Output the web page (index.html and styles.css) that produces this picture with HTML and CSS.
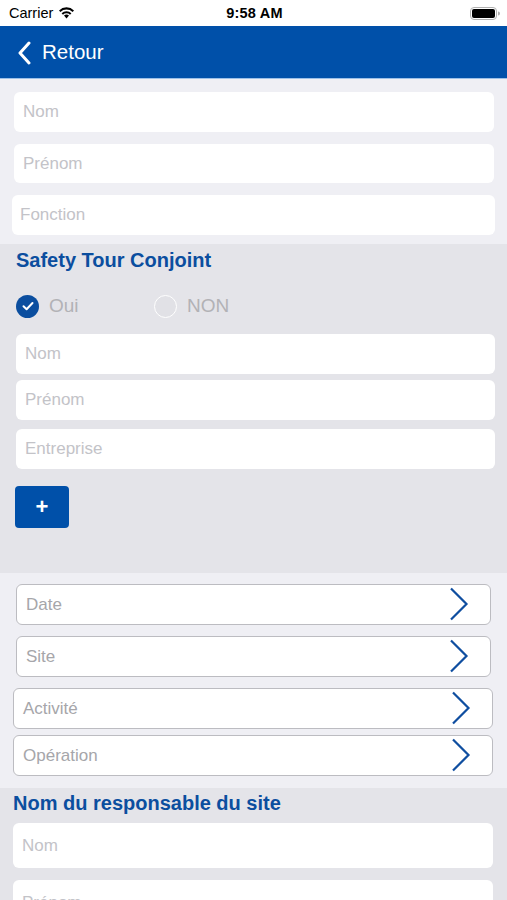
FILE: index.html
```html
<!DOCTYPE html>
<html lang="fr">
<head>
<meta charset="utf-8">
<title>Safety Tour</title>
<link rel="stylesheet" href="styles.css">
</head>
<body>
<div class="screen">
  <div class="status">
    <div class="status-left">
      <span>Carrier</span>
      <svg class="wifi" width="17" height="13" viewBox="0 0 17 13">
        <path d="M8.5 12.5 L11 9.6 A4 4 0 0 0 6 9.6 Z" fill="#000"/>
        <path d="M3.6 7.2 A7 7 0 0 1 13.4 7.2 L12 8.7 A5 5 0 0 0 5 8.7 Z" fill="#000"/>
        <path d="M1 4.4 A10.8 10.8 0 0 1 16 4.4 L14.6 5.9 A8.8 8.8 0 0 0 2.4 5.9 Z" fill="#000"/>
      </svg>
    </div>
    <div class="status-time">9:58 AM</div>
    <div class="status-right">
      <svg width="30" height="13" viewBox="0 0 30 13">
        <rect x="0.5" y="0.5" width="26" height="12" rx="3.5" fill="none" stroke="#b0b0b0"/>
        <rect x="2" y="2" width="23" height="9" rx="2" fill="#000"/>
        <path d="M28 4.5 A2 2 0 0 1 28 8.5 Z" fill="#b0b0b0"/>
      </svg>
    </div>
  </div>
  <div class="navbar">
    <svg class="back" width="14" height="24" viewBox="0 0 14 24">
      <path d="M12 2 L3 12 L12 22" fill="none" stroke="#fff" stroke-width="3" stroke-linecap="round" stroke-linejoin="round"/>
    </svg>
    <span class="back-label">Retour</span>
  </div>

  <section class="sec sec-light sec-one">
    <div class="field f-a">Nom</div>
    <div class="field f-a">Prénom</div>
    <div class="field f-b">Fonction</div>
  </section>

  <section class="sec sec-dark sec-two">
    <h2 class="title">Safety Tour Conjoint</h2>
    <div class="radios">
      <div class="radio">
        <span class="dot dot-on">
          <svg width="22" height="22" viewBox="0 0 22 22"><path d="M6.5 11.3 L9.6 14.3 L15.5 8" fill="none" stroke="#fff" stroke-width="2" stroke-linecap="round" stroke-linejoin="round"/></svg>
        </span>
        <span class="radio-label">Oui</span>
      </div>
      <div class="radio">
        <span class="dot dot-off"></span>
        <span class="radio-label">NON</span>
      </div>
    </div>
    <div class="stack">
      <div class="field f-c">Nom</div>
      <div class="field f-c">Prénom</div>
      <div class="field f-c f-gap">Entreprise</div>
    </div>
    <button class="plus">+</button>
  </section>

  <section class="sec sec-light sec-three">
    <div class="row r-a"><span>Date</span><svg class="chev" width="20" height="34" viewBox="0 0 20 34"><path d="M2 1.5 L17.5 17 L2 32.5" fill="none" stroke="#0f4ea0" stroke-width="2.2"/></svg></div>
    <div class="row r-a"><span>Site</span><svg class="chev" width="20" height="34" viewBox="0 0 20 34"><path d="M2 1.5 L17.5 17 L2 32.5" fill="none" stroke="#0f4ea0" stroke-width="2.2"/></svg></div>
    <div class="row r-b"><span>Activité</span><svg class="chev" width="20" height="34" viewBox="0 0 20 34"><path d="M2 1.5 L17.5 17 L2 32.5" fill="none" stroke="#0f4ea0" stroke-width="2.2"/></svg></div>
    <div class="row r-b r-tight"><span>Opération</span><svg class="chev" width="20" height="34" viewBox="0 0 20 34"><path d="M2 1.5 L17.5 17 L2 32.5" fill="none" stroke="#0f4ea0" stroke-width="2.2"/></svg></div>
  </section>

  <section class="sec sec-dark sec-four">
    <h2 class="title title-b">Nom du responsable du site</h2>
    <div class="field f-d f-tall">Nom</div>
    <div class="field f-d f-tall f-next">Prénom</div>
  </section>
</div>
</body>
</html>
```

FILE: styles.css
```css
* { box-sizing: border-box; }
html, body { margin: 0; padding: 0; }
body {
  font-family: "Liberation Sans", Arial, sans-serif;
  background: #e4e4e9;
  width: 507px;
  height: 900px;
  overflow: hidden;
}
.screen { display: flex; flex-direction: column; }

.status {
  height: 26px;
  background: #fff;
  display: flex;
  align-items: center;
  justify-content: space-between;
  padding: 0 7px 0 9px;
  font-size: 14.5px;
  color: #000;
}
.status-left { display: flex; align-items: center; gap: 5px; width: 120px; }
.wifi { margin-top: -2px; }
.status-time { font-weight: bold; font-size: 14.5px; letter-spacing: 0.2px; }
.status-right { width: 120px; display: flex; justify-content: flex-end; }

.navbar {
  height: 53px;
  background: #0050a9;
  border-bottom: 1px solid #9cc0e8;
  display: flex;
  align-items: center;
  padding-left: 17px;
  gap: 11px;
  color: #fff;
}
.back { margin-top: 1px; }
.back-label { font-size: 20.5px; }

.sec { display: flex; flex-direction: column; }
.sec-light { background: #efeff4; }
.sec-dark { background: #e4e4e9; }

.field {
  background: #fff;
  height: 40px;
  border-radius: 6px;
  display: flex;
  align-items: center;
  color: #c3c3c8;
  font-size: 17px;
  padding-left: 9px;
}

.sec-one { padding: 13px 0 9px; gap: 12px; height: 165px; }
.f-a { margin: 0 13px 0 14px; }
.f-b { margin: 0 12px 0 12px; padding-left: 8px; }

.sec-two { height: 329px; padding: 5px 0 0; }
.title {
  margin: 0;
  font-size: 20px;
  font-weight: bold;
  color: #0b4e9f;
  padding-left: 16px;
  line-height: 22px;
}
.radios {
  display: flex;
  align-items: center;
  padding-left: 16px;
  margin-top: 23px;
  height: 24px;
}
.radio { display: flex; align-items: center; width: 138px; }
.dot {
  width: 23px; height: 23px; border-radius: 50%;
  display: inline-flex; align-items: center; justify-content: center;
}
.dot-on { background: #0b4e9f; }
.dot-off { background: #e1e1e6; border: 1.5px solid #fff; }
.radio-label { color: #b2b2b6; font-size: 19px; margin-left: 10px; }
.stack { display: flex; flex-direction: column; margin-top: 16px; gap: 6px; }
.f-c { margin: 0 12px 0 16px; padding-left: 9px; }
.f-gap { margin-top: 3px; }
.plus {
  margin: 17px 0 0 15px;
  width: 54px; height: 42px;
  background: #0050a9;
  border: none;
  border-radius: 4px;
  color: #fff;
  font-size: 22px;
  font-weight: bold;
  font-family: "Liberation Sans", Arial, sans-serif;
  padding: 0;
  line-height: 1;
}

.sec-three { height: 215px; padding-top: 11px; gap: 11px; }
.row {
  height: 41px;
  background: #fff;
  border: 1px solid #bcbcc1;
  border-radius: 6px;
  display: flex;
  align-items: center;
  justify-content: space-between;
  color: #a6a6aa;
  font-size: 17px;
  padding: 0 21px 0 9px;
}
.r-a { margin: 0 16px 0 16px; }
.r-b { margin: 0 14px 0 13px; padding-left: 9px; }
.r-tight { margin-top: -5px; }
.chev { margin-top: -2px; }

.sec-four { padding-top: 4px; flex: 1; }
.title-b { padding-left: 13px; }
.f-d { margin: 0 14px 0 13px; }
.f-tall { height: 45px; margin-top: 9px; }
.f-next { margin-top: 12px; }
```
